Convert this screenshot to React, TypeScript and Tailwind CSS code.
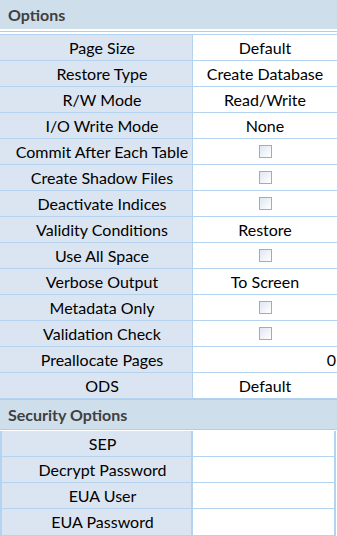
import { ReactNode } from "react";

type Row = { label: string; value?: string; kind?: "text" | "check" | "right" | "empty" };

const options: Row[] = [
  { label: "Page Size", value: "Default" },
  { label: "Restore Type", value: "Create Database" },
  { label: "R/W Mode", value: "Read/Write" },
  { label: "I/O Write Mode", value: "None" },
  { label: "Commit After Each Table", kind: "check" },
  { label: "Create Shadow Files", kind: "check" },
  { label: "Deactivate Indices", kind: "check" },
  { label: "Validity Conditions", value: "Restore" },
  { label: "Use All Space", kind: "check" },
  { label: "Verbose Output", value: "To Screen" },
  { label: "Metadata Only", kind: "check" },
  { label: "Validation Check", kind: "check" },
  { label: "Preallocate Pages", value: "0", kind: "right" },
  { label: "ODS", value: "Default" },
];

const security: Row[] = [
  { label: "SEP", kind: "empty" },
  { label: "Decrypt Password", kind: "empty" },
  { label: "EUA User", kind: "empty" },
  { label: "EUA Password", kind: "empty" },
];

const Checkbox = () => (
  <span className="block h-[13px] w-[13px] border border-[#8fb0d6] bg-gradient-to-br from-[#dfe7f2] to-white" />
);

const SectionHeader = ({ children }: { children: ReactNode }) => (
  <div className="flex h-[29px] items-center bg-[#cfdeeb] pl-[8px] text-[16px] font-bold text-[#404040]">
    {children}
  </div>
);

const Separator = () => (
  <div className="h-[5px] border-t border-t-white bg-white">
    <div className="mt-[1px] h-px bg-[#c6c9cd]" />
  </div>
);

const OptionRow = ({ row }: { row: Row }) => (
  <div className="grid h-[26px] grid-cols-[193px_1fr] border-b border-[#b3d3f0]">
    <div className="flex items-center justify-center whitespace-nowrap border-r border-[#b3d3f0] bg-[#dbe5f1] pl-[12px] text-black">
      {row.label}
    </div>
    <div
      className={
        row.kind === "right"
          ? "flex items-center justify-end pr-[1px] text-black"
          : "flex items-center justify-center text-black"
      }
    >
      {row.kind === "check" ? <Checkbox /> : row.value}
    </div>
  </div>
);

export default function App() {
  return (
    <div className="h-[536px] w-[337px] overflow-hidden bg-white font-['Lato','Open_Sans',sans-serif] text-[16px] leading-none">
      <SectionHeader>Options</SectionHeader>
      <Separator />
      <div className="border-t border-[#b3d3f0]">
        {options.map((r) => (
          <OptionRow key={r.label} row={r} />
        ))}
      </div>
      <div className="h-px bg-[#c6c9cd]" />
      <SectionHeader>Security Options</SectionHeader>
      <div className="h-[2px] border-t border-t-[#c6c9cd] bg-white" />
      <div className="mr-[1px] border-x-2 border-b border-[#b3d3f0] border-t-0">
        {security.map((r) => (
          <div key={r.label} className="grid h-[26px] grid-cols-[191px_1fr] border-b border-[#b3d3f0] last:border-b-0">
            <div className="flex items-center justify-center whitespace-nowrap border-r-2 border-[#b3d3f0] bg-[#dbe5f1] pl-[12px] text-black">
              {r.label}
            </div>
            <div className="bg-white" />
          </div>
        ))}
      </div>
    </div>
  );
}
